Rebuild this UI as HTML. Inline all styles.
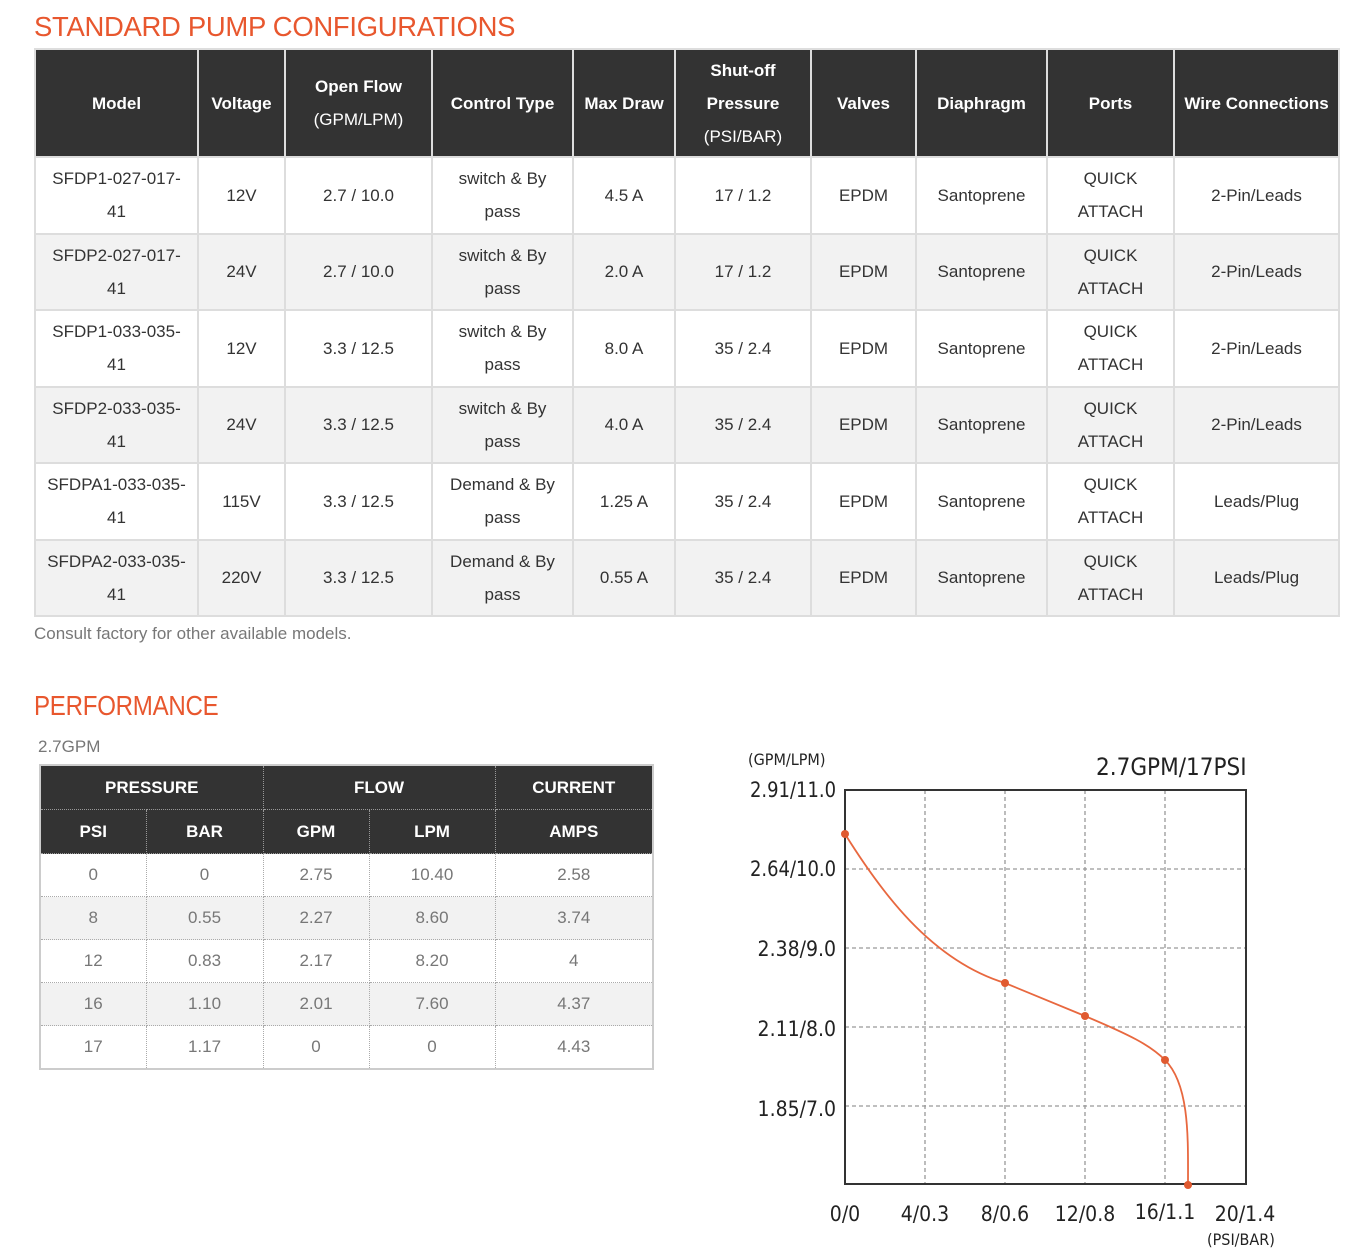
<!DOCTYPE html>
<html><head><meta charset="utf-8"><style>
body{margin:0;background:#fff;font-family:"Liberation Sans",Arial,sans-serif;color:#333;width:1349px;height:1259px;position:relative;overflow:hidden}
h2{position:absolute;margin:0;font-weight:normal;color:#e8572e;font-size:28px;letter-spacing:-0.3px;transform-origin:0 0;white-space:nowrap}
table{border-collapse:collapse;position:absolute}
#t1{left:34px;top:48px;width:1304px;table-layout:fixed}
#t1 th{background:#333;color:#fff;font-size:17px;font-weight:bold;line-height:33px;border:2px solid #ddd;padding:0 2px;height:106px}
#t1 th span{font-weight:normal}
#t1 td{text-align:center;font-size:17px;line-height:33px;border:2px solid #ddd;height:74.5px;padding:0 2px}
#t1 tr:nth-child(odd) td{background:#f2f2f2}
#t2{left:39px;top:764px;width:614px;table-layout:fixed;border:2px solid #ccc}
#t2 th{background:#333;color:#fff;font-size:17px;font-weight:bold;height:43px;padding:0;border:1px dotted #999}
#t2 td{text-align:center;color:#777;font-size:17px;height:42px;border:1px dotted #aaa;padding:0}
#t2 tr:nth-child(even) td{background:#f2f2f2}
</style></head><body>
<h2 style="left:34px;top:11px;transform:scaleX(0.98)">STANDARD PUMP CONFIGURATIONS</h2>
<table id="t1">
<colgroup><col style="width:163px"><col style="width:87px"><col style="width:147px"><col style="width:141px"><col style="width:102px"><col style="width:136px"><col style="width:105px"><col style="width:131px"><col style="width:127px"><col style="width:165px"></colgroup>
<tr><th>Model</th><th>Voltage</th><th>Open Flow<br><span>(GPM/LPM)</span></th><th>Control Type</th><th>Max Draw</th><th>Shut-off<br>Pressure<br><span>(PSI/BAR)</span></th><th>Valves</th><th>Diaphragm</th><th>Ports</th><th>Wire Connections</th></tr>
<tr><td>SFDP1-027-017-<br>41</td><td>12V</td><td>2.7 / 10.0</td><td>switch &amp; By<br>pass</td><td>4.5 A</td><td>17 / 1.2</td><td>EPDM</td><td>Santoprene</td><td>QUICK<br>ATTACH</td><td>2-Pin/Leads</td></tr>
<tr><td>SFDP2-027-017-<br>41</td><td>24V</td><td>2.7 / 10.0</td><td>switch &amp; By<br>pass</td><td>2.0 A</td><td>17 / 1.2</td><td>EPDM</td><td>Santoprene</td><td>QUICK<br>ATTACH</td><td>2-Pin/Leads</td></tr>
<tr><td>SFDP1-033-035-<br>41</td><td>12V</td><td>3.3 / 12.5</td><td>switch &amp; By<br>pass</td><td>8.0 A</td><td>35 / 2.4</td><td>EPDM</td><td>Santoprene</td><td>QUICK<br>ATTACH</td><td>2-Pin/Leads</td></tr>
<tr><td>SFDP2-033-035-<br>41</td><td>24V</td><td>3.3 / 12.5</td><td>switch &amp; By<br>pass</td><td>4.0 A</td><td>35 / 2.4</td><td>EPDM</td><td>Santoprene</td><td>QUICK<br>ATTACH</td><td>2-Pin/Leads</td></tr>
<tr><td>SFDPA1-033-035-<br>41</td><td>115V</td><td>3.3 / 12.5</td><td>Demand &amp; By<br>pass</td><td>1.25 A</td><td>35 / 2.4</td><td>EPDM</td><td>Santoprene</td><td>QUICK<br>ATTACH</td><td>Leads/Plug</td></tr>
<tr><td>SFDPA2-033-035-<br>41</td><td>220V</td><td>3.3 / 12.5</td><td>Demand &amp; By<br>pass</td><td>0.55 A</td><td>35 / 2.4</td><td>EPDM</td><td>Santoprene</td><td>QUICK<br>ATTACH</td><td>Leads/Plug</td></tr>
</table>
<div style="position:absolute;left:34px;top:624px;font-size:17px;color:#777">Consult factory for other available models.</div>
<h2 style="left:34px;top:690px;transform:scaleX(0.86)">PERFORMANCE</h2>
<div style="position:absolute;left:38px;top:737px;font-size:17px;color:#777">2.7GPM</div>
<table id="t2">
<colgroup><col style="width:106px"><col style="width:117px"><col style="width:106px"><col style="width:126px"><col style="width:158px"></colgroup>
<tr><th colspan="2">PRESSURE</th><th colspan="2">FLOW</th><th>CURRENT</th></tr>
<tr><th>PSI</th><th>BAR</th><th>GPM</th><th>LPM</th><th>AMPS</th></tr>
<tr><td>0</td><td>0</td><td>2.75</td><td>10.40</td><td>2.58</td></tr>
<tr><td>8</td><td>0.55</td><td>2.27</td><td>8.60</td><td>3.74</td></tr>
<tr><td>12</td><td>0.83</td><td>2.17</td><td>8.20</td><td>4</td></tr>
<tr><td>16</td><td>1.10</td><td>2.01</td><td>7.60</td><td>4.37</td></tr>
<tr><td>17</td><td>1.17</td><td>0</td><td>0</td><td>4.43</td></tr>
</table>
<svg style="position:absolute;left:0;top:0" width="1349" height="1259" font-family="'DejaVu Sans Condensed','Liberation Sans Narrow',sans-serif" fill="#222">
<g stroke="#999" stroke-dasharray="4,3" stroke-width="1.3">
<line x1="925" y1="790" x2="925" y2="1184"/><line x1="1005" y1="790" x2="1005" y2="1184"/><line x1="1085" y1="790" x2="1085" y2="1184"/><line x1="1165" y1="790" x2="1165" y2="1184"/>
<line x1="845" y1="869" x2="1246" y2="869"/><line x1="845" y1="948" x2="1246" y2="948"/><line x1="845" y1="1027" x2="1246" y2="1027"/><line x1="845" y1="1106" x2="1246" y2="1106"/>
</g>
<rect x="845" y="790" width="401" height="394" fill="none" stroke="#333" stroke-width="2"/>
<path d="M845,834 C880,890 930,960 1005,983 L1085,1016 C1130,1035 1150,1045 1165,1060 C1190,1085 1188,1140 1188,1185" fill="none" stroke="#e8683f" stroke-width="1.8"/>
<g fill="#e05a30"><circle cx="845" cy="834" r="4"/><circle cx="1005" cy="983" r="4"/><circle cx="1085" cy="1016" r="4"/><circle cx="1165" cy="1060" r="4"/><circle cx="1188" cy="1185" r="4"/></g>
<text x="748" y="765" font-size="16">(GPM/LPM)</text>
<text x="1096" y="775" font-size="24">2.7GPM/17PSI</text>
<g font-size="21" text-anchor="end"><text x="836" y="797" textLength="86" lengthAdjust="spacingAndGlyphs">2.91/11.0</text><text x="836" y="876" textLength="86" lengthAdjust="spacingAndGlyphs">2.64/10.0</text><text x="836" y="956">2.38/9.0</text><text x="836" y="1036">2.11/8.0</text><text x="836" y="1116">1.85/7.0</text></g>
<g font-size="21" text-anchor="middle"><text x="845" y="1221">0/0</text><text x="925" y="1221">4/0.3</text><text x="1005" y="1221">8/0.6</text><text x="1085" y="1221">12/0.8</text><text x="1165" y="1219">16/1.1</text><text x="1245" y="1221">20/1.4</text></g>
<text x="1207" y="1245" font-size="16">(PSI/BAR)</text>
</svg>
</body></html>
